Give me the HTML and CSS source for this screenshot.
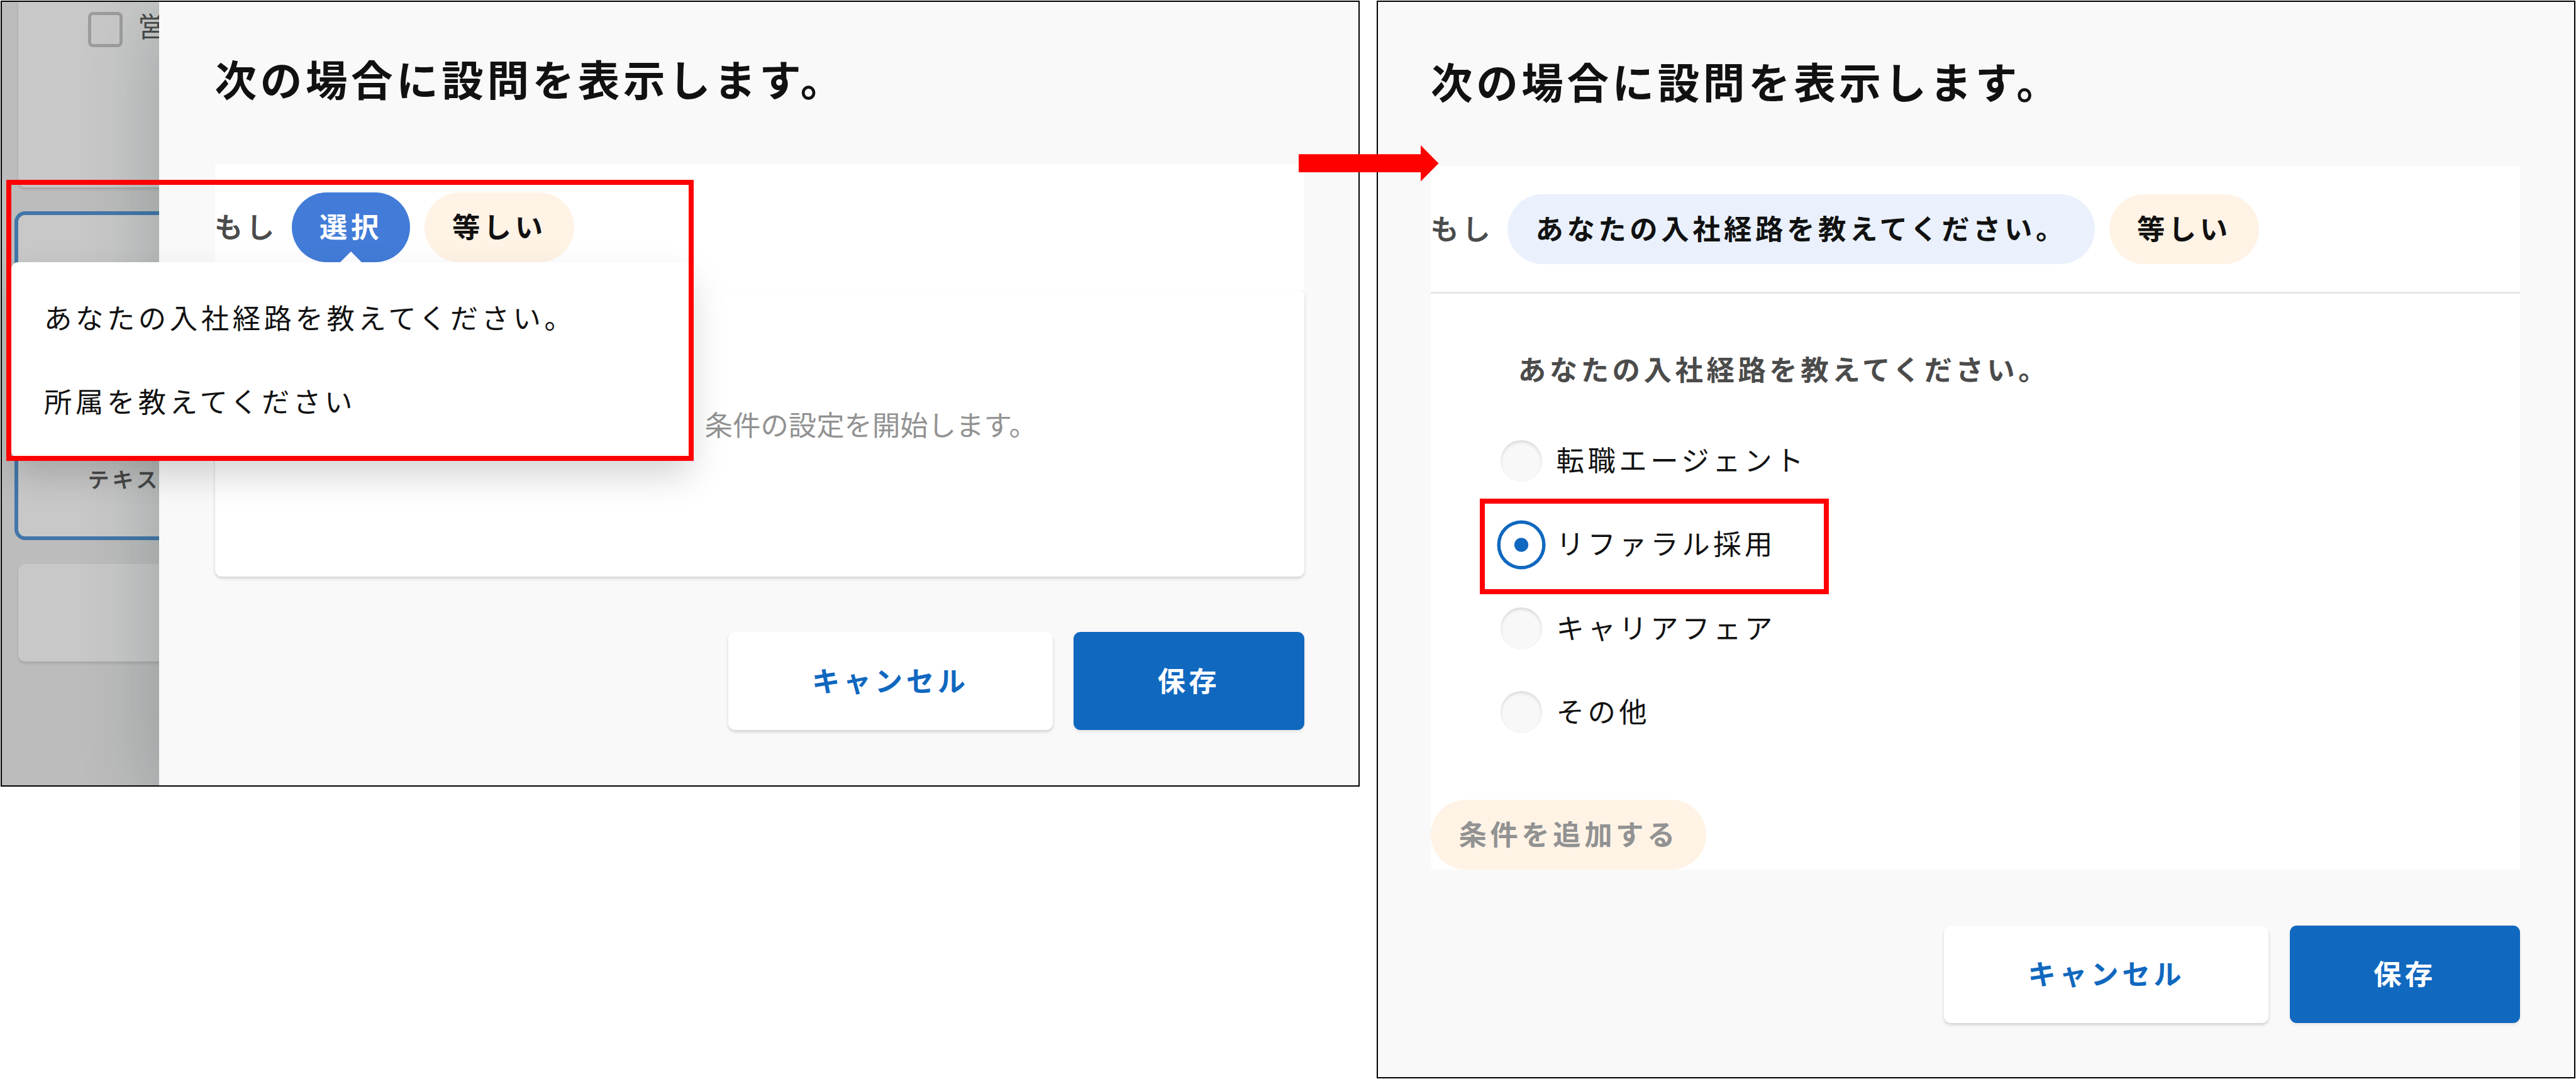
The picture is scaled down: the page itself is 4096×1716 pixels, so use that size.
FILE: index.html
```html
<!DOCTYPE html>
<html lang="ja">
<head>
  <meta charset="UTF-8" />
  <meta name="viewport" content="width=device-width, initial-scale=1.0"/>
  <title>設問の表示条件</title>
  <link rel="stylesheet" href="styles.css">
</head>
<body>

<main class="steps">
  <section class="frame frame-before">
    <div class="survey">
      <div class="survey-card first">
        <span class="checkbox"></span>
        <span class="check-label">営</span>
      </div>
      <div class="survey-card active">
        <span class="type-label">テキス</span>
      </div>
      <div class="survey-card empty"></div>
    </div>

    <div class="drawer">
      <h2>次の場合に設問を表示します。</h2>
      <div class="condition">
        <span class="if">もし</span>
        <button class="pill selected">選択</button>
        <button class="pill operator">等しい</button>
      </div>
      <div class="card">
        <p class="hint">条件の設定を開始します。</p>
      </div>
      <div class="actions">
        <button class="btn cancel">キャンセル</button>
        <button class="btn save">保存</button>
      </div>
    </div>

    <ul class="menu">
      <li>あなたの入社経路を教えてください。</li>
      <li>所属を教えてください</li>
    </ul>
  </section>

  <section class="frame frame-after">
    <div class="drawer">
      <h2>次の場合に設問を表示します。</h2>
      <div class="condition">
        <span class="if">もし</span>
        <button class="pill question">あなたの入社経路を教えてください。</button>
        <button class="pill operator">等しい</button>
      </div>
      <div class="answers">
        <h3>あなたの入社経路を教えてください。</h3>
        <div class="option"><span class="radio"></span><span class="label">転職エージェント</span></div>
        <div class="option"><span class="radio checked"></span><span class="label">リファラル採用</span></div>
        <div class="option"><span class="radio"></span><span class="label">キャリアフェア</span></div>
        <div class="option"><span class="radio"></span><span class="label">その他</span></div>
        <button class="pill add">条件を追加する</button>
      </div>
      <div class="actions">
        <button class="btn cancel">キャンセル</button>
        <button class="btn save">保存</button>
      </div>
    </div>
  </section>
</main>

<!-- red marks over the two steps -->
<div class="mark mark-menu"></div>
<div class="mark mark-option"></div>
<svg class="arrow" width="223" height="58" viewBox="0 0 223 58">
  <path d="M0 14.3H194V0L222.5 28.8L194 57.5V43H0Z" fill="#ff0000"/>
</svg>

</body>
</html>
```

FILE: styles.css
```css
* {
  box-sizing: border-box;
}
body {
  margin: 0;
  background: #ffffff;
  color: #111111;
  font-family: "Noto Sans CJK JP", sans-serif;
  font-size: 44.4px;
  letter-spacing: 5.55px;
  line-height: 66px;
  overflow: hidden;
}
h2, h3, p, ul {
  margin: 0;
  padding: 0;
}
button {
  border: none;
  font: inherit;
  letter-spacing: inherit;
  font-weight: 700;
  white-space: nowrap;
}

/* layout */
.steps {
  display: flex;
  align-items: flex-start;
  gap: 27px;
  width: 4096px;
  height: 1716px;
  padding: 1px;
}
.frame {
  position: relative;
  display: flex;
  border: 2px solid #000000;
  overflow: hidden;
}
.frame-before {
  width: 2161px;
  height: 1250px;
}
.frame-after {
  width: 1906px;
  height: 1714px;
}

/* survey behind the drawer */
.survey {
  width: 250px;
  padding-left: 26px;
  display: flex;
  flex-direction: column;
  gap: 44px;
  background: #bcbcbc;
}
.survey-card {
  display: flex;
  flex: none;
  width: 300px;
  padding-left: 111px;
  border-radius: 11px;
  background: #c8c8c8;
  box-shadow: 0 3px 4px rgba(0, 0, 0, 0.13);
}
.survey-card.first {
  height: 295px;
  padding-top: 16px;
  border-radius: 0 0 11px 11px;
}
.survey-card.active {
  height: 511px;
  padding-top: 386px;
  box-shadow: 0 0 0 6px #4376a8;
}
.survey-card.empty {
  height: 155px;
}
.checkbox {
  width: 55px;
  height: 56px;
  border: 5px solid #9d9d9d;
  border-radius: 8px;
}
.check-label {
  margin: -12px 0 0 24px;
  color: #4b4b4b;
}
.type-label {
  color: #4b4b4b;
  font-size: 33.3px;
  -webkit-text-stroke: 1.3px #4b4b4b;
}

/* drawer */
.drawer {
  position: relative;
  flex: 1;
  padding: 71px 86.5px 0 88.6px;
  background: #f9f9f9;
  border-radius: 0 0 7px 7px;
}
.frame-before .drawer {
  box-shadow: 0 22px 125px rgba(0, 45, 40, 0.24);
}
.frame-after .drawer {
  padding: 75px 86px 0 84px;
}
h2 {
  margin-bottom: 87.4px;
  font-size: 66.6px;
  line-height: 100px;
  font-weight: 700;
}
.frame-after h2 {
  margin-bottom: 86.4px;
}
.condition {
  display: flex;
  align-items: center;
  gap: 22.2px;
  height: 199.6px;
  background: #ffffff;
}
.if {
  width: 99.9px;
  margin-top: -5px;
  color: #4b4b4b;
  -webkit-text-stroke: 1.8px #4b4b4b;
}
.pill {
  position: relative;
  height: 111px;
  padding: 0 44.4px 5px;
  border-radius: 56px;
  background: #fff3e6;
  color: #111111;
}
.pill.selected {
  background: #427cd8;
  color: #ffffff;
}
.pill.selected::after {
  content: "";
  position: absolute;
  left: 50%;
  bottom: 0;
  margin-left: -17px;
  border: 17px solid transparent;
  border-top: none;
  border-bottom-color: #ffffff;
}
.pill.question {
  background: #eaf1fc;
}
.pill.add {
  display: block;
  margin-top: 72.4px;
  color: #929292;
}
.card {
  height: 455.6px;
  padding: 180px 0 0 779px;
  border-radius: 11px;
  background: #ffffff;
  box-shadow: 0 3px 5px rgba(0, 0, 0, 0.16);
}
.hint {
  color: #929292;
  letter-spacing: 0;
  white-space: nowrap;
}
.actions {
  display: flex;
  justify-content: flex-end;
  gap: 33.3px;
  margin-top: 88.8px;
}
.btn {
  height: 155.4px;
  padding: 0 0 5px;
  border-radius: 11px;
  box-shadow: 0 3px 5px rgba(0, 0, 0, 0.16);
}
.btn.cancel {
  width: 516.3px;
  background: #ffffff;
  color: #1068bf;
}
.btn.save {
  width: 366.3px;
  background: #1068bf;
  color: #ffffff;
  box-shadow: 0 3px 5px rgba(60, 20, 0, 0.08);
}

/* dropdown */
.menu {
  position: absolute;
  left: 15px;
  top: 414px;
  width: 1081px;
  height: 311px;
  padding: 19.5px 52px;
  border-radius: 11px;
  background: #ffffff;
  box-shadow: 0 28px 56px rgba(0, 0, 0, 0.17);
  list-style: none;
}
.menu li {
  height: 133.2px;
  line-height: 133.2px;
}

/* answers */
.answers {
  border-top: 3px solid #e5e5e5;
  background: #ffffff;
}
h3 {
  padding: 86px 0 47.6px 138.8px;
  color: #4b4b4b;
  font-size: 44.4px;
  line-height: 66px;
  font-weight: 700;
}
.option {
  display: flex;
  align-items: center;
  gap: 22.2px;
  height: 133.2px;
  padding-left: 110.7px;
}
.option .label {
  margin-top: -6px;
}
.radio {
  width: 66.6px;
  height: 66.6px;
  border-radius: 50%;
  background: #f8f8f8;
  box-shadow: inset 0 3px 5px rgba(0, 0, 0, 0.13);
}
.radio.checked {
  background: radial-gradient(circle, #1068bf 10.6px, #ffffff 11.6px);
  box-shadow: 0 0 0 5.5px #1068bf;
}

/* marks */
.mark {
  position: absolute;
  border: 8px solid #ff0000;
}
.mark-menu {
  left: 10px;
  top: 286px;
  width: 1093px;
  height: 447px;
}
.mark-option {
  left: 2353px;
  top: 793px;
  width: 555px;
  height: 152px;
}
.arrow {
  position: absolute;
  left: 2065px;
  top: 231px;
}
```
